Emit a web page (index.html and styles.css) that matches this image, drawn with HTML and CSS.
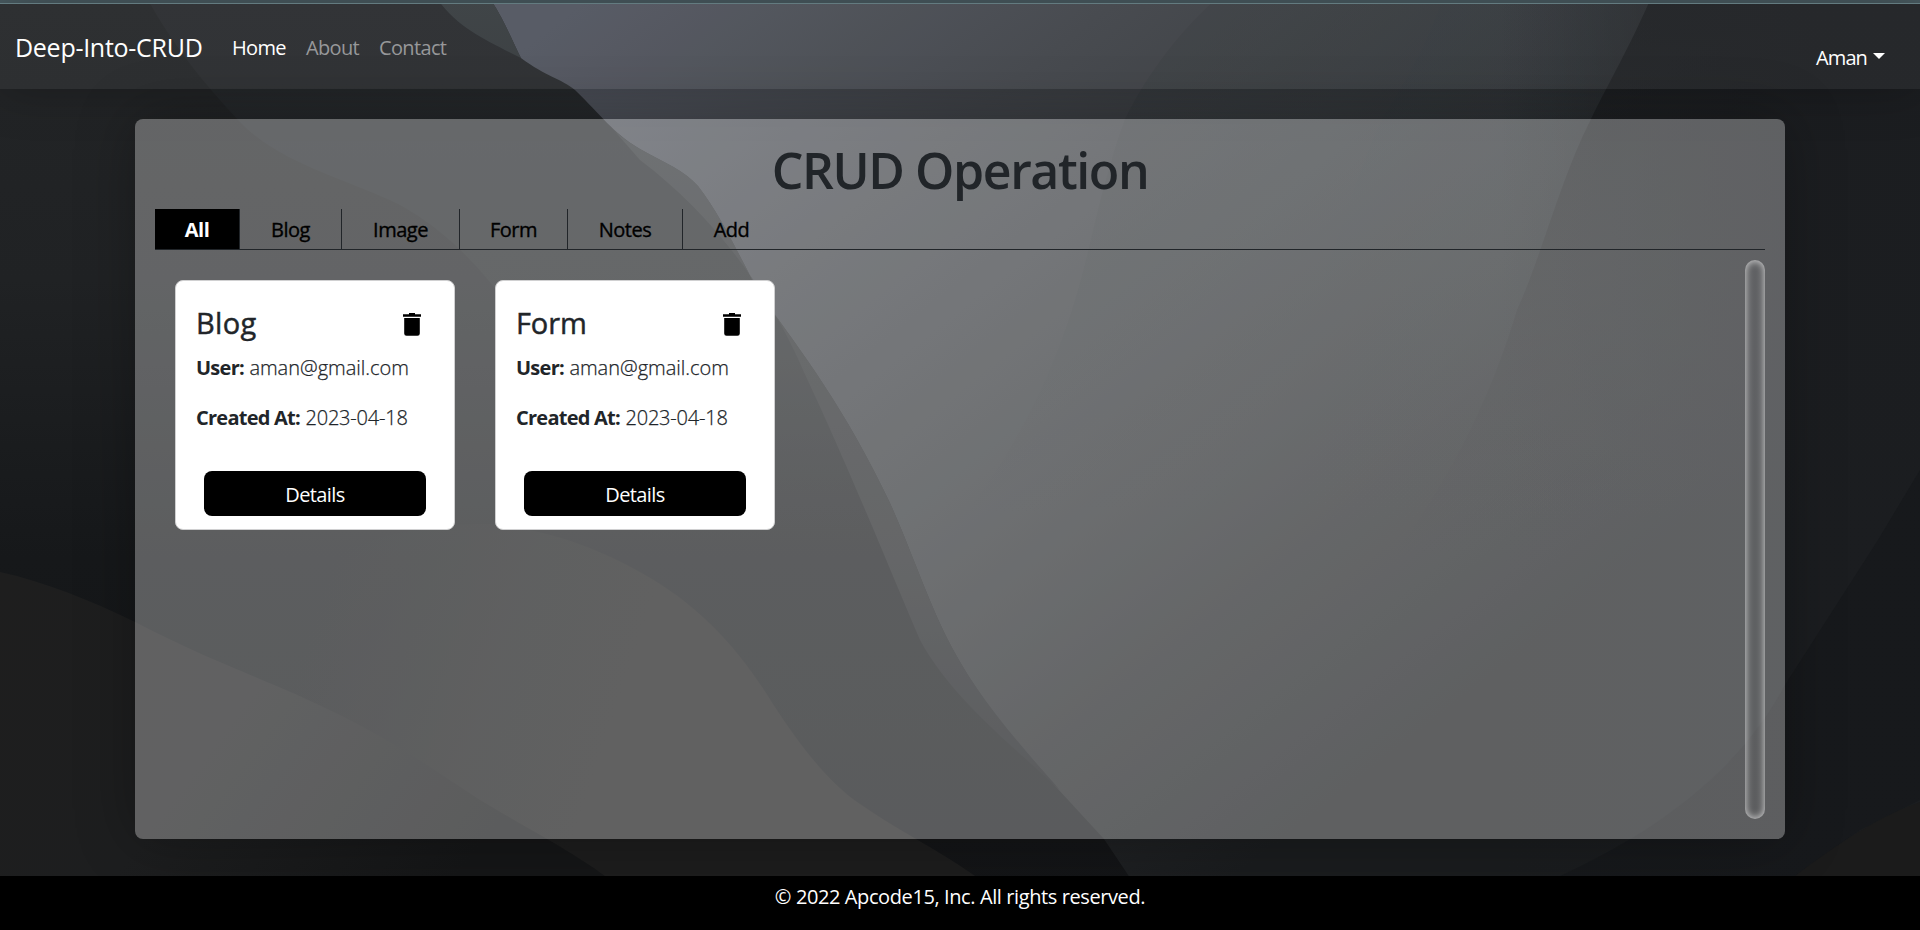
FILE: index.html
```html
<!DOCTYPE html>
<html lang="en">
<head>
<meta charset="utf-8">
<title>Deep-Into-CRUD</title>
<link rel="stylesheet" href="styles.css">
</head>
<body>
<svg class="backdrop" viewBox="0 0 1920 930" preserveAspectRatio="none" aria-hidden="true">
  <defs>
    <linearGradient id="base" x1="0" y1="0" x2="0" y2="1"><stop offset="0" stop-color="#232527"/><stop offset=".3" stop-color="#202224"/><stop offset=".6" stop-color="#16181a"/><stop offset="1" stop-color="#131416"/></linearGradient>
    <linearGradient id="slope" gradientUnits="userSpaceOnUse" x1="0" y1="0" x2="0" y2="930"><stop offset="0" stop-color="#272a2d"/><stop offset=".35" stop-color="#232628"/><stop offset=".58" stop-color="#1c1e20" stop-opacity="0"/></linearGradient>
    <linearGradient id="sky" gradientUnits="userSpaceOnUse" x1="560" y1="20" x2="1230" y2="880"><stop offset="0" stop-color="#50545e"/><stop offset=".3" stop-color="#3f4247"/><stop offset=".55" stop-color="#323538"/><stop offset=".8" stop-color="#232527"/><stop offset="1" stop-color="#1a1c1e"/></linearGradient>
    <linearGradient id="fold" gradientUnits="userSpaceOnUse" x1="0" y1="0" x2="0" y2="520"><stop offset="0" stop-color="#31363b" stop-opacity=".5"/><stop offset=".5" stop-color="#2c3133" stop-opacity=".45"/><stop offset="1" stop-color="#26282b" stop-opacity="0"/></linearGradient>
    <linearGradient id="dark" gradientUnits="userSpaceOnUse" x1="0" y1="0" x2="0" y2="560"><stop offset="0" stop-color="#1b1d20"/><stop offset=".25" stop-color="#1d1f21" stop-opacity=".8"/><stop offset="1" stop-color="#1b1c1f" stop-opacity="0"/></linearGradient>
    <linearGradient id="edge" gradientUnits="userSpaceOnUse" x1="1500" y1="0" x2="1920" y2="0"><stop offset="0" stop-color="#1b1d20" stop-opacity="0"/><stop offset=".75" stop-color="#1b1d20" stop-opacity=".95"/></linearGradient>
    <linearGradient id="rim" gradientUnits="userSpaceOnUse" x1="0" y1="0" x2="0" y2="800"><stop offset="0" stop-color="#363b3f"/><stop offset=".4" stop-color="#2a2c2e"/><stop offset=".7" stop-color="#232527"/><stop offset="1" stop-color="#15171a"/></linearGradient>
    <linearGradient id="hill" gradientUnits="userSpaceOnUse" x1="320" y1="600" x2="620" y2="700"><stop offset="0" stop-color="#1a1b1c" stop-opacity="0"/><stop offset=".6" stop-color="#1c1d1d" stop-opacity=".8"/><stop offset="1" stop-color="#1d1d1d"/></linearGradient>
    <linearGradient id="near" gradientUnits="userSpaceOnUse" x1="0" y1="570" x2="440" y2="900"><stop offset="0" stop-color="#1e1e1e"/><stop offset=".5" stop-color="#1d1e1f"/><stop offset="1" stop-color="#151617"/></linearGradient>
  </defs>
  <rect width="1920" height="930" fill="url(#base)"/>
  <path d="M148 0C170 40 200 80 240 122S350 180 400 205C500 260 560 380 620 520L1150 930V0Z" fill="url(#slope)"/>
  <path d="M491 0C504 20 512 40 521 58C545 76 562 79 575 90C602 116 612 132 640 149C665 163 684 170 698 186C724 220 739 257 762 297C802 352 846 410 890 503C907 540 924 590 944 632C971 688 1010 734 1035 764L1104 839L1145 900V930H1920V0Z" fill="url(#sky)"/>
  <path d="M438 0C460 30 490 42 521 58C512 40 504 20 491 0ZM612 128C620 137 629 142 640 149C665 163 684 170 698 186C724 220 739 257 762 297C802 352 846 410 890 503C907 540 924 590 944 632C971 688 1010 734 1060 790C1000 735 950 695 920 640C890 570 850 470 803 370C774 302 720 220 640 160Z" fill="url(#rim)"/>
  <path d="M1215 0C1170 40 1140 88 1125 119C1102 180 1092 245 1072 310C1050 380 1010 460 960 520H1920V0Z" fill="url(#fold)" opacity=".7"/>
  <path d="M1442 0C1425 50 1400 90 1382 119C1357 170 1340 240 1310 310C1280 380 1240 450 1190 520H1920V0Z" fill="url(#fold)" opacity=".65"/>
  <path d="M1650 0C1628 50 1610 80 1591 119C1560 180 1542 255 1517 310C1490 400 1450 480 1390 560H1920V0Z" fill="url(#dark)"/>
  <rect x="1500" width="420" height="930" fill="url(#edge)"/>
  <path d="M1920 470L1878 540L1785 685C1740 770 1660 830 1560 876H1795L1860 830L1920 800Z" fill="#121416" opacity=".4"/>
  <path d="M1795 876C1830 850 1870 820 1920 802V930H1720Z" fill="#1b1b1b"/>
  <path d="M250 600C330 545 410 522 490 524C555 531 600 550 640 572C700 605 740 650 773 704C800 746 830 784 860 804C894 828 935 848 975 876L1000 930H200Z" fill="url(#hill)"/>
  <path d="M0 572C45 582 90 600 135 622C220 666 270 680 340 715C400 745 440 774 480 800C530 830 570 850 605 876L640 930H0Z" fill="url(#near)"/>
</svg>
<div class="page">
  <header class="navbar">
    <a class="brand">Deep-Into-CRUD</a>
    <nav class="links"><a class="active">Home</a><a>About</a><a>Contact</a></nav>
    <a class="account"><span>Aman</span><i class="caret"></i></a>
  </header>
  <main class="panel">
    <h1>CRUD Operation</h1>
    <div class="tabs">
      <a class="tab tab-all selected">All</a><a class="tab tab-blog">Blog</a><a class="tab tab-image">Image</a><a class="tab tab-form">Form</a><a class="tab tab-notes">Notes</a><a class="tab tab-add">Add</a>
    </div>
    <div class="body">
      <div class="cards">
        <article class="card">
          <div class="card-head"><h2 class="t-blog">Blog</h2><svg class="trash" viewBox="0 0 18 23"><path d="M6 0h6v1.3h6v2.5H0V1.3h6zM1.2 5h15.6v15.5q0 2.3-2.3 2.3H3.5q-2.3 0-2.3-2.3z"/></svg></div>
          <p><b>User:</b> <span class="v-user">aman@gmail.com</span></p>
          <p><b>Created At:</b> <span class="v-date">2023-04-18</span></p>
          <a class="button">Details</a>
        </article>
        <article class="card">
          <div class="card-head"><h2 class="t-form">Form</h2><svg class="trash" viewBox="0 0 18 23"><path d="M6 0h6v1.3h6v2.5H0V1.3h6zM1.2 5h15.6v15.5q0 2.3-2.3 2.3H3.5q-2.3 0-2.3-2.3z"/></svg></div>
          <p><b>User:</b> <span class="v-user">aman@gmail.com</span></p>
          <p><b>Created At:</b> <span class="v-date">2023-04-18</span></p>
          <a class="button">Details</a>
        </article>
      </div>
      <div class="scrollbar"></div>
    </div>
  </main>
  <footer class="footer">© 2022 Apcode15, Inc. All rights reserved.</footer>
</div>
</body>
</html>
```
FILE: styles.css
```css
* { box-sizing: border-box; }
body {
  margin: 0;
  height: 930px;
  overflow: hidden;
  background: #151719;
  color: #212529;
  font: 400 20px/30px "Open Sans", "Noto Sans", sans-serif;
}
h1, h2, p { margin: 0; }
.backdrop { position: absolute; inset: 0; width: 100%; height: 930px; }
.page {
  position: relative;
  height: 930px;
  display: flex;
  flex-direction: column;
  border-top: 3px solid #48595f;
}
.navbar {
  height: 86px;
  flex: none;
  display: flex;
  align-items: flex-start;
  padding: 0 35px 0 15px;
  border-top: 1px solid #637b80;
  background: rgba(255, 255, 255, .05);
  box-shadow: 0 0 50px rgba(0, 0, 0, .25);
  color: #fff;
  white-space: nowrap;
}
.brand { width: 217px; padding-top: 28px; font-size: 25px; letter-spacing: -.28px; }
.links { display: flex; gap: 20px; padding-top: 29px; color: #97989a; letter-spacing: -.65px; }
.links .active { color: #fff; }
.account { margin-left: auto; padding-top: 39px; display: flex; gap: 6px; letter-spacing: -.9px; }
.caret { margin-top: 10px; height: 0; border: 6px solid transparent; border-top-color: #fff; border-bottom: 0; }
.panel {
  width: 1650px;
  height: 720px;
  margin: 30px auto 0;
  padding: 20px;
  border-radius: 8px;
  background: rgba(255, 255, 255, .3);
  box-shadow: 0 0 60px rgba(0, 0, 0, .3);
}
h1 { height: 70px; text-align: center; font-size: 50px; line-height: 63px; font-weight: 600; letter-spacing: -1.4px; }
.tabs { display: flex; height: 41px; border-bottom: 1px solid #212529; color: #000; }
.tab { border-right: 1px solid #212529; text-align: center; line-height: 42px; letter-spacing: -.5px; white-space: nowrap; -webkit-text-stroke: .35px; }
.tab:last-child { border-right: 0; }
.selected { background: #000; color: #fff; font-weight: 700; -webkit-text-stroke: 0; }
.tab-all { width: 85px; }
.tab-blog { width: 102px; }
.tab-image { width: 118px; }
.tab-form { width: 108px; }
.tab-notes { width: 115px; }
.tab-add { width: 97px; }
.body { display: flex; justify-content: space-between; padding-top: 10px; }
.cards { display: flex; gap: 40px; padding: 20px; }
.card {
  width: 280px;
  height: 250px;
  padding: 20px 20px 0;
  display: flex;
  flex-direction: column;
  border: 1px solid #d0d0d1;
  border-radius: 8px;
  background: #fff;
}
.card-head { display: flex; flex: none; justify-content: space-between; height: 52px; padding-right: 13px; }
h2 { font-size: 29px; line-height: 43px; font-weight: 400; -webkit-text-stroke: .45px; }
.t-blog { letter-spacing: .3px; }
.t-form { letter-spacing: -.1px; }
.trash { width: 18px; height: 23px; margin-top: 12px; fill: #000; }
.card p { flex: none; height: 50px; white-space: nowrap; letter-spacing: -.75px; }
.card span { font-weight: 300; margin-left: 1px; -webkit-text-stroke: .25px; }
.v-user { letter-spacing: -.02px; }
.v-date { letter-spacing: -.2px; }
.button {
  width: 222px;
  height: 45px;
  margin: 18px 0 0 8px;
  flex: none;
  border-radius: 8px;
  background: #000;
  color: #fff;
  text-align: center;
  line-height: 48px;
  letter-spacing: -.6px;
}
.scrollbar { width: 20px; height: 559px; border-radius: 10px; box-shadow: inset 0 0 7px 1px rgba(255, 255, 255, .65); }
.footer { height: 54px; margin-top: auto; background: #000; color: #fff; text-align: center; line-height: 42px; letter-spacing: -.4px; }
```
